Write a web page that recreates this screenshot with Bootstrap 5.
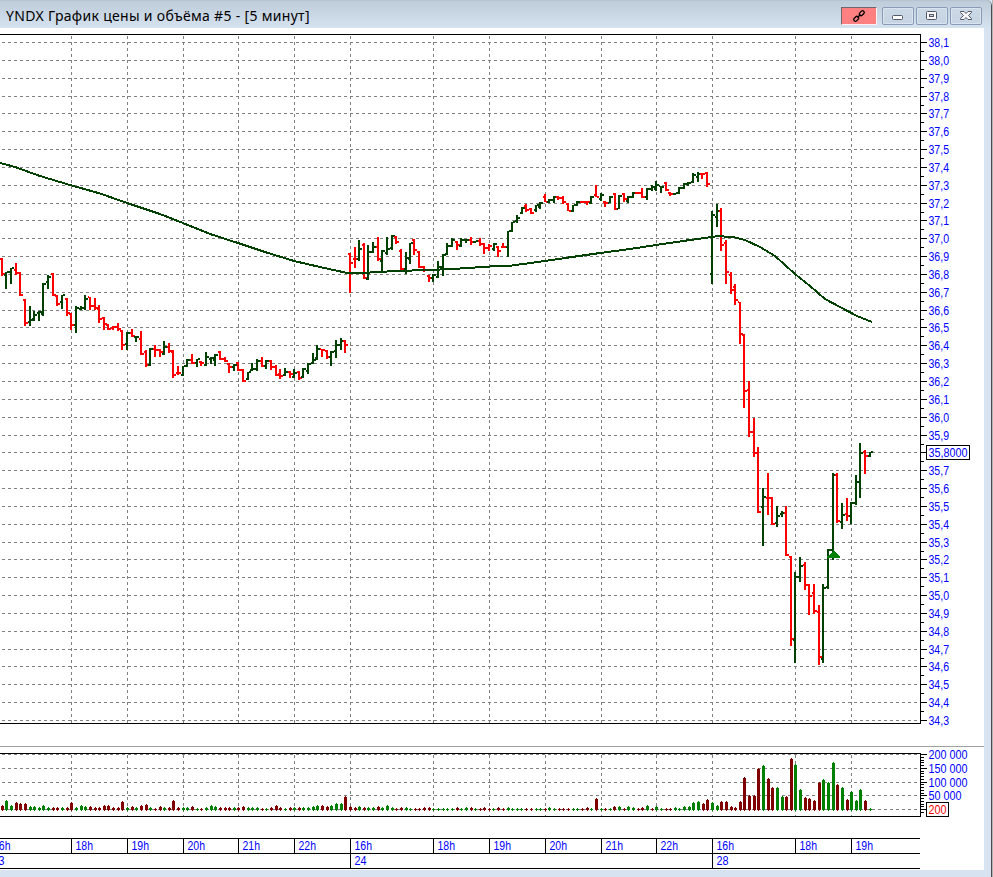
<!DOCTYPE html>
<html lang="ru">
<head>
<meta charset="utf-8">
<meta name="viewport" content="width=device-width, initial-scale=1">
<title>YNDX</title>
<link href="https://cdn.jsdelivr.net/npm/bootstrap@5.3.0/dist/css/bootstrap.min.css" rel="stylesheet">
<style>
html,body{height:877px;overflow:hidden}
body{background:#d7e3f0;font-family:"Liberation Sans",Arial,sans-serif}
.win{width:993px;height:877px;border-right:1px solid #b4b4b4}
.win-in{border-right:1px solid #4b4b50;background:#d7e3f0;border-top-right-radius:6px}
.win-title{height:28px;background:linear-gradient(#becbd8,#d5e2f0);border-top:1px solid #b7c4d1;padding:0 9px 0 6px;border-top-right-radius:5px}
.win-caption{font-family:"Noto Sans","Open Sans",sans-serif;font-size:14px;letter-spacing:.31px;line-height:18px;color:#000;white-space:nowrap;margin-top:6px}
.win-tools{gap:2px;margin-top:6px}
.win-btn{width:32px;height:18px;border:1px solid #8a9bb5;border-radius:2px;background:linear-gradient(#cbd8e6,#c6d4e3);box-shadow:inset 0 0 0 1px #d9e4f0;padding:0}
.link-btn{width:36px;height:18px;border:1px solid;border-color:#70686c #fff0f0 #fff0f0 #70686c;border-radius:0;background:#ff8080;box-shadow:none;margin-right:3px}
.client{width:984px;height:842px;background:#fff}
.client svg,.win-btn svg{display:block}
.lbl{font-family:"Liberation Sans",Arial,sans-serif;font-size:12px;fill:#00f}
.grid-line{stroke:#808080;stroke-width:1;stroke-dasharray:3 3}
.axis{stroke:#000;stroke-width:1;fill:none}
</style>
<script src="https://cdn.jsdelivr.net/npm/bootstrap@5.3.0/dist/js/bootstrap.bundle.min.js"></script>
</head>
<body>
<div class="win">
 <div class="win-in h-100">
  <header class="win-title d-flex justify-content-between align-items-start">
   <div class="win-caption" id="caption">YNDX График цены и объёма #5 - [5 минут]</div>
   <div class="win-tools d-flex">
    <button class="win-btn link-btn d-flex justify-content-center align-items-center" aria-label="link"><svg width="14" height="14" viewBox="0 0 14 14"><g fill="none" stroke="#000" stroke-width="1.3"><rect x="-2.7" y="-1.7" width="5.4" height="3.4" rx="1.5" transform="translate(4.2 9.8) rotate(-45)"/><rect x="-2.7" y="-1.7" width="5.4" height="3.4" rx="1.5" transform="translate(9.8 4.2) rotate(-45)"/><path d="M5.500 8.500L8.500 5.500" stroke-width="1.2"/></g></svg></button>
    <button class="win-btn d-flex justify-content-center align-items-center" aria-label="minimize"><svg width="12" height="12"><rect x=".5" y="5.5" width="10" height="4" rx="1" fill="#fff" stroke="#535666"/></svg></button>
    <button class="win-btn d-flex justify-content-center align-items-center" aria-label="restore"><svg width="12" height="12"><rect x=".5" y="1.5" width="10" height="8" rx="1" fill="#f7f7f7" stroke="#535666"/><rect x="3.5" y="4.5" width="4" height="2" fill="#c9d6e4" stroke="#535666"/></svg></button>
    <button class="win-btn d-flex justify-content-center align-items-center" aria-label="close"><svg width="12" height="12"><path d="M.5 1.5h3.500l2 2 2-2h3.500v1L8.500 5.500l3 3v1H8l-2-2-2 2H.5v-1l3-3-3-3z" fill="#f7f7f7" stroke="#535666"/></svg></button>
   </div>
  </header>
  <main class="client"><svg id="chart" width="984" height="842" viewBox="0 28 984 842" shape-rendering="crispEdges"></svg></main>
 </div>
</div>
<script>
const out=[];
const UP='#004000',DOWN='#ff0000';
const line=(x1,y1,x2,y2,c)=>out.push(`<line class="${c}" x1="${x1}" y1="${y1}" x2="${x2}" y2="${y2}"/>`);
const rect=(x,y,w,h,f)=>out.push(`<rect x="${x}" y="${y}" width="${w}" height="${h}" fill="${f}"/>`);
const text=(x,y,s,w,f)=>out.push(`<text class="lbl" x="${x}" y="${y}" textLength="${w}" lengthAdjust="spacingAndGlyphs"${f?` style="fill:${f}"`:''}>${s}</text>`);
const hours=[[71,'18h'],[127,'19h'],[183,'20h'],[238,'21h'],[294,'22h'],[350,'16h'],[433,'18h'],[489,'19h'],[545,'20h'],[601,'21h'],[656,'22h'],[712,'16h'],[795,'18h'],[851,'19h']];

// Grids and frames
for(const [x] of hours){line(x+.5,36,x+.5,723,'grid-line');line(x+.5,755,x+.5,816,'grid-line')}
for(let k=0;k<39;k++){const y=Math.round(42+17.842*k);line(2,y+.5,920,y+.5,'grid-line')}
const volY=[754,768,782,795,809];
volY.forEach(y=>line(2,y+.5,920,y+.5,'grid-line'));
out.push('<path class="axis" d="M0 34.500H920.500V723.500H0M0 753.500H920.500V816.500H0M0 838.500H920M0 853.500H920M0 868.500H920"/>');
rect(0,746,984,1,'#a0a0a0');

// Price scale
for(let k=0;k<39;k++){
 const y=Math.round(42+17.842*k);
 rect(920,y,7,1,'#000');
 if(k<38)rect(920,y+9,4,1,'#000');
 if(k!==23)text(928.500,y+5,((381-k)/10).toFixed(1).replace('.',','),20.500);
}
out.push('<rect x="926.500" y="445.500" width="43" height="14" fill="#fff" stroke="#000"/>');
text(928.500,457,'35,8000',39);

// Volume scale
for(let i=0;i<=21;i++)rect(920,Math.round(754+i*2.75),4,1,'#000');
['200 000','150 000','100 000','50 000'].forEach((s,i)=>{rect(920,volY[i],7,1,'#000');text(928.500,volY[i]+5,s,i<3?39:33)});
rect(920,809,7,1,'#000');
out.push('<rect x="926.500" y="802.500" width="22" height="14" fill="#fff" stroke="#000"/>');
text(928.500,814,'200',18,'#f00000');

// Time scale
for(const [x,s] of hours){rect(x,838,1,15,'#000');text(x+4.500,850,s,17.500)}
text(-7,850,'16h',17.500);
text(-8,865,'23',12.500);
for(const [x,s] of [[350,'24'],[712,'28']]){rect(x,853,1,15,'#000');text(x+4.500,865,s,12)}

// Price bars by session: x, high, low, open, close, direction, in thirds of a pixel from the session origin
const sessions=[
[0,230,`6,84,137,87,132,r;18,125,177,134,126,g;33,113,161,126,114,g;48,99,135,119,128,r;60,125,197,128,195,r;75,208,287,210,279,r;90,228,287,277,271,g;102,243,272,268,255,g;117,243,272,248,245,g;129,159,257,252,161,g;144,135,176,155,140,g;159,130,197,132,195,r;171,195,227,198,222,r;186,195,237,216,196,g;201,205,257,207,250,r;213,248,299,251,285,r;228,229,308,284,235,g;243,228,239,236,234,g;255,196,239,233,206,g;270,200,239,202,228,r;285,205,239,227,235,r;297,226,278,236,266,r;312,262,299,265,282,r;324,281,299,284,296,r;339,287,299,295,290,r;354,280,304,290,297,r;366,300,359,303,345,r;381,307,360,342,309,g;396,297,320,309,318,r;408,318,336,322,321,g;423,303,374,326,372,r;438,359,410,367,404,r;450,355,407,404,357,g;465,345,381,356,360,r;480,357,381,360,365,r;492,333,374,372,352,g;507,339,369,351,363,r;519,361,443,365,436,r;534,408,434,430,430,r`],
[180,300,`9,198,227,224,199,g;21,178,202,198,180,g;36,162,192,180,188,r;51,176,201,188,178,g;63,184,197,186,190,r;78,156,197,194,172,g;93,171,192,178,174,g;105,162,197,180,165,g;120,154,180,156,177,r;135,171,186,178,184,r;147,189,218,191,202,r;162,191,213,202,195,g;174,186,213,190,210,r;189,207,245,210,242,r;204,215,240,237,217,g;216,189,213,210,207,g;231,177,212,207,182,g;246,171,201,182,198,r;258,181,207,198,184,g;273,179,209,183,201,r;288,195,229,201,225,r;300,207,237,222,227,r;315,204,229,225,217,g;330,213,235,216,222,r;342,207,235,232,218,g;357,213,239,217,235,r;369,204,234,230,207,g;384,189,222,213,191,g;399,159,192,190,179,g;411,135,180,174,147,g;426,147,171,147,151,r;441,150,177,152,172,r;453,152,197,170,155,g;468,120,174,154,134,g;483,114,150,134,122,g;495,121,159,123,135,r`],
[340,220,`30,99,218,102,128,r;45,81,144,117,117,r;57,60,122,116,88,g;72,68,177,75,174,r;84,75,180,176,97,g;99,66,98,96,80,g;114,50,122,80,117,r;126,90,155,122,92,g;141,50,105,100,86,g;156,45,90,85,48,g;168,48,72,50,67,r;183,87,149,92,147,r;198,96,161,147,114,g;210,68,132,116,70,g;222,57,105,60,91,r;237,93,143,95,140,r;252,138,155,141,150,r;267,164,186,167,173,r;279,162,186,174,164,g;294,123,174,170,141,g;309,102,168,142,104,g;321,69,105,102,77,g;336,54,81,77,60,g;351,62,90,65,76,r;363,53,81,77,60,g;378,57,68,61,60,g;393,51,75,60,65,r;405,62,68,65,64,g;420,54,77,62,72,r;432,68,101,73,83,r;447,71,93,83,77,r;462,69,92,86,72,g;474,77,110,80,94,r;489,69,84,80,80,r;504,33,110,80,34,g`],
[500,160,`36,185,215,213,187,g;51,165,188,184,174,g;66,141,162,160,143,g;78,131,155,138,150,r;93,143,161,147,158,r;108,134,155,150,136,g;120,126,147,140,128,g;135,102,126,110,125,r;147,117,129,126,119,g;162,107,129,120,112,g;174,108,120,112,114,r;189,108,131,114,126,r;204,128,153,131,152,r;219,134,155,152,136,g;231,123,137,134,125,g;246,122,128,125,125,r;261,122,134,125,127,r;273,108,131,128,112,g;288,74,111,105,110,r;303,98,123,116,104,g;315,123,140,126,128,r;330,107,129,128,110,g;345,99,150,102,147,r;357,105,147,146,107,g;372,99,125,103,118,r;384,107,128,123,110,g;399,95,114,110,100,g;411,95,101,99,99,r;426,85,114,100,110,r;441,83,119,112,86,g;456,75,92,86,82,g;468,63,93,88,75,g;483,78,99,78,80,g;498,66,93,70,91,r;510,96,107,99,102,r;525,98,105,102,100,g;537,81,102,98,84,g;552,70,86,83,73,g;564,65,78,72,68,g;579,39,70,66,46,g;594,36,65,50,43,g;606,40,56,43,43,r;621,36,80,39,72,r`],
[690,190,`66,63,281,252,75,g;81,42,110,80,63,g;93,54,182,62,165,r;108,150,281,158,246,r;123,246,311,255,300,r;135,282,345,291,330,r;150,335,461,335,432,r;162,432,654,434,603,r;177,573,740,600,726,r;192,684,801,726,790,r`],
[740,430,`54,51,248,69,246,r;69,174,347,232,200,g;84,129,255,204,204,r;96,201,284,204,282,r;111,228,291,279,257,g;126,243,261,252,248,g;138,228,377,248,375,r;153,378,647,380,628,r;165,426,698,630,440,g;180,381,455,440,408,g;195,396,479,405,465,r;207,462,555,465,498,r;222,462,551,489,543,r;237,525,704,545,681,r;249,462,698,687,474,g;264,357,476,471,360,g;279,129,389,360,134,g;291,129,279,134,273,r;306,219,296,276,255,g;321,204,272,252,258,r;333,216,282,258,219,g;348,135,225,219,155,g;360,39,203,155,68,g;375,60,131,65,77,r;390,66,80,77,66,g`]];
for(const [ox,oy,data] of sessions)for(const bar of data.split(';')){
 const [x,h,l,o,c,d]=bar.split(',');
 const X=ox+Math.round(x/3)-1,T=oy+Math.round(h/3),B=oy+Math.round(l/3),col=d==='g'?UP:DOWN;
 rect(X,T,2,Math.max(2,B-T),col);
 rect(X-1,oy+Math.round(o/3-1),1,2,col);
 rect(X+2,oy+Math.round(c/3-1),2,2,col);
}

// Moving average
const ma='0,163 15,167 40,176 70,185 100,193.500 130,204 160,214 183,223 210,234 238,243 265,252 294,261 320,267 345,272.500 370,272.500 395,271 430,270 460,268.500 490,266.500 512,265.500 545,261 565,258 600,253 630,249 656,245 690,240 712,237 718,236 735,237.500 745,240 760,247 775,256 795,274 810,286 825,299 840,307 857,316 872,322';
out.push(`<polyline points="${ma}" fill="none" stroke="${UP}" stroke-width="2"/>`);
out.push('<path d="M833 550h1v1h1v1h1v1h1v1h1v1h1v1h1v2h-13v-2h2v-1h1v-1h1v-1h1v-1h1z" fill="#008000"/>');

// Volume bars: x, top, direction, in thirds of a pixel
const volumes=[
[0,'8,195r 20,180g 35,196g 50,186r 62,189r 77,189r 92,198g 104,198g 119,202g 131,195g 146,202g 161,201r 173,201r 188,201g 203,202r 215,186r 230,201g 245,195g 257,198g 272,198r 287,201r 299,200r 314,195r 326,195r 341,202r 356,201r 368,183r 383,201g 398,198r 410,201g 425,195r 440,192r 452,201g 467,203r 482,198r 494,202g 509,202r 521,180r 536,202r 551,201g 563,201g 578,198r 593,204g 605,204r 620,201g 635,195g 647,198g 662,201r 677,201r 689,201r 704,201g 716,201r 731,198r 746,201g 758,201g 773,201g 788,204r 800,204g 815,202r 830,195r 842,201r 857,204g 872,201r 884,201g 899,201r 911,201g 926,201g 941,198g 953,195g 968,195r 983,198r 995,195g 1010,189g 1025,189g 1037,168r 1052,198r 1067,201r 1079,198g'],
[340,'74,201r 86,201g 101,201g 116,198r 128,201g 143,195g 158,201g 170,203r 185,201r 200,201g 212,203g 227,204r 239,204r 254,201r 269,201r 281,204g 296,204g 311,204g 323,204g 338,204g 353,201r 365,204g 380,201g 395,201r 407,204g 422,204r 434,201r 449,204r 461,204g 476,201r 491,204r 506,201g 518,204g 533,204g 545,204g 560,204r 575,204r 590,204g 602,204g 617,204r 629,201g 644,204g 659,204r 671,204r 686,204r 701,204g 713,204g 728,204r 743,201r 755,204g 770,174r 785,204g 797,204r 812,204g 824,198r 839,198g 854,204r 866,198g 881,201g 896,204r 908,201r 923,195g 938,204r 950,198g 965,204g 980,204r 992,204r 1007,201g 1019,204g 1034,198g 1049,198g'],
[690,'11,186g 26,183g 41,189r 53,178r 68,186g 83,196g 95,183r 110,183r 125,198r 137,202r 152,183r 164,111r 179,165r 193,165r 206,84r 221,75g 236,114r 248,141r 263,142g 278,169g 290,168r 305,54r 317,72g 332,147g 347,172r 359,174r 374,180r 389,126r 401,117g 416,127g 431,66g 443,132r 458,142g 473,177r 485,154g 500,180g 512,147g 527,180r 542,204g']];
for(const [ox,data] of volumes)for(const v of data.split(' ')){
 const [x,t]=v.slice(0,-1).split(',').map(Number),f=v.endsWith('g')?'#008000':'#800000';
 const cx=ox+Math.floor(x/3),top=740+Math.round(t/3);
 rect(cx,top,1,811-top,f);
 rect(cx-1,top+1,3,Math.max(1,810-top-1),f);
}
document.getElementById('chart').innerHTML=out.join('');
</script>
</body>
</html>
